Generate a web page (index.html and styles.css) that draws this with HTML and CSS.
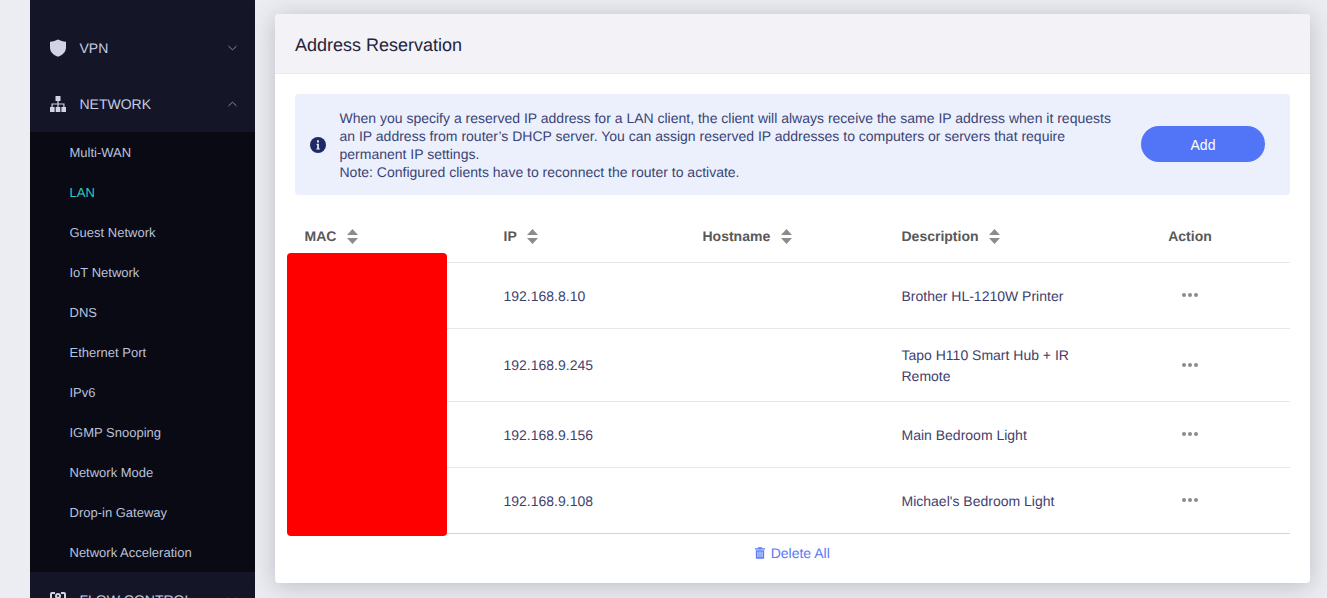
FILE: index.html
```html
<!DOCTYPE html>
<html lang="en">
<head>
    <meta charset="UTF-8">
    <link rel="stylesheet" href="styles.css">
</head>
<body>
    <div class="layout">
        <aside class="sidebar">
            <div class="nav-item">
                <svg class="nav-icon" viewBox="0 0 16 18"><path d="M8 .5c2.400 1.200 5 2 8 2.200v5.800c0 4.300-3.200 7.600-8 9.200-4.800-1.600-8-4.900-8-9.200V2.700C3 2.500 5.600 1.700 8 .5z"/></svg>
                <span class="nav-label">VPN</span>
                <svg class="nav-arrow" viewBox="0 0 10 6"><path d="M.5.8 5 5 9.500.8"/></svg>
            </div>
            <div class="nav-item">
                <svg class="nav-icon" viewBox="0 0 16 16">
                    <path d="M5.500 0h5v5H8.600v2.400h5.900V11h-1.200V8.600H8.600V11H7.400V8.600H2.700V11H1.500V7.400h5.900V5H5.500z"/>
                    <path d="M0 11h4.600v5H0zM5.700 11h4.600v5H5.700zM11.400 11H16v5h-4.600z"/>
                </svg>
                <span class="nav-label">NETWORK</span>
                <svg class="nav-arrow" viewBox="0 0 10 6"><path d="M.5 5.200 5 1l4.500 4.200"/></svg>
            </div>
            <ul class="submenu">
                <li>Multi-WAN</li>
                <li class="active">LAN</li>
                <li>Guest Network</li>
                <li>IoT Network</li>
                <li>DNS</li>
                <li>Ethernet Port</li>
                <li>IPv6</li>
                <li>IGMP Snooping</li>
                <li>Network Mode</li>
                <li>Drop-in Gateway</li>
                <li>Network Acceleration</li>
            </ul>
            <div class="nav-item">
                <svg class="nav-icon flow-icon" viewBox="0 0 16 16"><path d="M5 1H2a1 1 0 0 0-1 1v12a1 1 0 0 0 1 1h3M11 1h3a1 1 0 0 1 1 1v12a1 1 0 0 1-1 1h-3"/><circle cx="8" cy="4" r="2"/></svg>
                <span class="nav-label">FLOW CONTROL</span>
                <svg class="nav-arrow" viewBox="0 0 10 6"><path d="M.5.8 5 5 9.500.8"/></svg>
            </div>
        </aside>

        <main class="content">
            <section class="card">
                <h1 class="card-title">Address Reservation</h1>
                <div class="card-body">
                    <div class="notice">
                        <svg class="notice-icon" viewBox="0 0 16 16">
                            <circle cx="8" cy="8" r="8"/>
                            <path class="notice-i" d="M6.600 6.800h2.300v4.700h.9v1.100H6.300v-1.100h.9V7.900h-.6zM7.100 3.300h1.800v2.100H7.100z"/>
                        </svg>
                        <p class="notice-text">When you specify a reserved IP address for a LAN client, the client will always receive the same IP address when it requests an IP address from router’s DHCP server. You can assign reserved IP addresses to computers or servers that require permanent IP settings.<br>Note: Configured clients have to reconnect the router to activate.</p>
                        <button class="add-button">Add</button>
                    </div>

                    <table class="clients">
                        <thead>
                            <tr>
                                <th>MAC<svg class="sort" viewBox="0 0 11 15"><path d="M5.500 0 11 6H0zM0 9h11l-5.500 6z"/></svg></th>
                                <th>IP<svg class="sort" viewBox="0 0 11 15"><path d="M5.500 0 11 6H0zM0 9h11l-5.500 6z"/></svg></th>
                                <th>Hostname<svg class="sort" viewBox="0 0 11 15"><path d="M5.500 0 11 6H0zM0 9h11l-5.500 6z"/></svg></th>
                                <th>Description<svg class="sort" viewBox="0 0 11 15"><path d="M5.500 0 11 6H0zM0 9h11l-5.500 6z"/></svg></th>
                                <th class="action">Action</th>
                            </tr>
                        </thead>
                        <tbody>
                            <tr>
                                <td></td>
                                <td>192.168.8.10</td>
                                <td></td>
                                <td>Brother HL-1210W Printer</td>
                                <td class="action"><span class="dots"><i></i><i></i><i></i></span></td>
                            </tr>
                            <tr>
                                <td></td>
                                <td>192.168.9.245</td>
                                <td></td>
                                <td>Tapo H110 Smart Hub + IR Remote</td>
                                <td class="action"><span class="dots"><i></i><i></i><i></i></span></td>
                            </tr>
                            <tr>
                                <td></td>
                                <td>192.168.9.156</td>
                                <td></td>
                                <td>Main Bedroom Light</td>
                                <td class="action"><span class="dots"><i></i><i></i><i></i></span></td>
                            </tr>
                            <tr>
                                <td></td>
                                <td>192.168.9.108</td>
                                <td></td>
                                <td>Michael's Bedroom Light</td>
                                <td class="action"><span class="dots"><i></i><i></i><i></i></span></td>
                            </tr>
                        </tbody>
                    </table>

                    <div class="table-footer">
                        <a class="delete-all">
                            <svg viewBox="0 0 12 14"><path d="M4 0h4l.7 1.300H12v1.400H0V1.300h3.300zM1 3.600h10V13a1 1 0 0 1-1 1H2a1 1 0 0 1-1-1zm2 1.600v7h1v-7zm2.500 0v7h1v-7zm2.500 0v7h1v-7z" fill-rule="evenodd"/></svg>
                            Delete All
                        </a>
                    </div>
                </div>
                <div class="redaction"></div>
            </section>
        </main>
    </div>
</body>
</html>
```

FILE: styles.css
```css
html, body {
    margin: 0;
    padding: 0;
    height: 100%;
    overflow: hidden;
}

body {
    background: #ecedf2;
    color: #3f3f6e;
    font-family: "Liberation Sans", Arial, sans-serif;
    font-size: 14px;
    text-rendering: geometricPrecision;
}

.layout {
    display: flex;
    height: 598px;
    padding-left: 30px;
    overflow: hidden;
}

/* sidebar */
.sidebar {
    width: 225px;
    flex-shrink: 0;
    padding-top: 20px;
    background: #141628;
    color: #c6cde6;
}

.nav-item {
    display: flex;
    align-items: center;
    height: 56px;
    padding: 0 18px 0 20px;
}

.nav-icon {
    width: 16px;
    height: 18px;
    margin-right: 13.500px;
    fill: #d2d4e6;
}

.flow-icon {
    fill: none;
    stroke: #d2d4e6;
    stroke-width: 2;
}

.nav-label {
    flex: 1;
    font-size: 14px;
}

.nav-arrow {
    width: 9px;
    height: 6px;
    fill: none;
    stroke: #8f95b4;
    stroke-width: 1;
}

.submenu {
    margin: 0;
    padding: 0;
    list-style: none;
    background: #090a14;
}

.submenu li {
    height: 40px;
    padding-left: 39.500px;
    font-size: 13px;
    line-height: 41px;
    color: #b9c1dc;
}

.submenu li.active {
    color: #2fc6c0;
}

/* main card */
.content {
    flex: 1;
    padding: 14px 17px 15px 20px;
}

.card {
    position: relative;
    height: 569px;
    box-sizing: border-box;
    background: #fff;
    border-radius: 4px;
    box-shadow: 0 3px 24px rgba(50, 50, 70, 0.26);
}

.card-title {
    margin: 0;
    height: 59px;
    padding-left: 20px;
    background: #f2f2f7;
    border-bottom: 1px solid #e9e9ef;
    border-radius: 4px 4px 0 0;
    font-size: 18px;
    font-weight: 400;
    line-height: 62px;
    color: #24243c;
}

.card-body {
    padding: 20px 20px 0;
}

.notice {
    display: flex;
    align-items: center;
    height: 101px;
    box-sizing: border-box;
    padding: 0 25px 0 14.500px;
    background: #ecf0fd;
    border-radius: 4px;
}

.notice-icon {
    width: 16px;
    height: 16px;
    flex-shrink: 0;
    margin-right: 14px;
    fill: #1e2a66;
}

.notice-i {
    fill: #ecf0fd;
}

.notice-text {
    flex: 1;
    margin: 0;
    font-size: 14px;
    line-height: 18px;
    color: #3a4474;
}

.add-button {
    width: 124px;
    height: 36px;
    flex-shrink: 0;
    margin: 0 0 1px 20px;
    padding: 2px 0 0;
    border: none;
    border-radius: 18px;
    background: #5274f7;
    color: #fff;
    font-family: inherit;
    font-size: 14px;
}

/* table */
.clients {
    width: 100%;
    table-layout: fixed;
    border-collapse: collapse;
    border-bottom: 1px solid #d3d3d8;
}

.clients th {
    height: 67px;
    padding: 16px 10px 0 9.500px;
    box-sizing: border-box;
    text-align: left;
    font-size: 14px;
    color: #595959;
    border-bottom: 1px solid #e8e8ec;
}

.clients td {
    height: 66px;
    padding: 16px 10px 14px 9.500px;
    box-sizing: border-box;
    line-height: 21px;
    border-bottom: 1px solid #e8e8ec;
}

.clients tbody tr:last-child td {
    border-bottom: none;
}

.clients th.action {
    padding: 16px 1px 0 0;
    text-align: center;
}

.clients td.action {
    padding: 0 1px 1px 0;
    text-align: center;
}

.sort {
    width: 11px;
    height: 15px;
    margin-left: 10.500px;
    vertical-align: -3px;
    fill: #8c8c8c;
}

.dots {
    display: inline-flex;
    gap: 2px;
    vertical-align: middle;
}

.dots i {
    width: 4px;
    height: 4px;
    border-radius: 50%;
    background: #8c8c8c;
}

.table-footer {
    display: flex;
    justify-content: center;
    height: 39px;
    align-items: center;
}

.delete-all {
    display: flex;
    align-items: center;
    gap: 5.500px;
    color: #5a7af7;
}

.delete-all svg {
    width: 10px;
    height: 12px;
    fill: #5a7af7;
}

/* masked mac addresses */
.redaction {
    position: absolute;
    left: 12px;
    top: 239px;
    width: 160px;
    height: 283px;
    background: #f00;
    border-radius: 4px;
}
```
